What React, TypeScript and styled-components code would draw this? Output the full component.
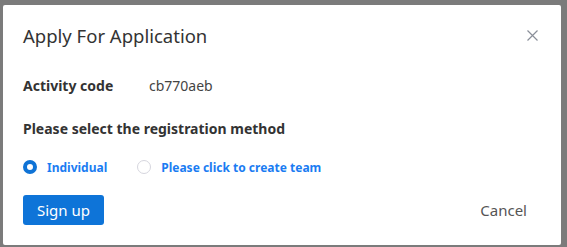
import React, { useState } from 'react'
import styled, { createGlobalStyle } from 'styled-components'

const GlobalStyle = createGlobalStyle`
  html, body {
    margin: 0;
    padding: 0;
    background: #7b7b7b;
    font-family: 'Noto Sans', 'Open Sans', sans-serif;
  }
`

const Backdrop = styled.div`
  width: 567px;
  height: 247px;
  padding: 5px 6px 2px 3px;
  box-sizing: border-box;
  background: #7b7b7b;
  display: flex;
`

const Dialog = styled.div`
  flex: 1;
  background: #fff;
  border-radius: 2px;
  padding: 18px 20px 0 20px;
  display: flex;
  flex-direction: column;
`

const Header = styled.div`
  display: flex;
  align-items: center;
  justify-content: space-between;
  height: 24px;
`

const Title = styled.div`
  font-size: 18.5px;
  color: #333;
`

const CloseButton = styled.button`
  border: 0;
  background: none;
  padding: 0;
  margin-right: 3px;
  display: flex;
  cursor: pointer;
`

const InfoRow = styled.div`
  display: flex;
  align-items: center;
  margin-top: 28px;
  font-size: 14px;
  height: 20px;
`

const Label = styled.span`
  font-weight: 700;
  color: #333;
  width: 126px;
`

const Value = styled.span`
  color: #444;
`

const SectionTitle = styled.div`
  margin-top: 24px;
  font-size: 14px;
  font-weight: 700;
  color: #333;
  height: 20px;
  line-height: 20px;
`

const RadioGroup = styled.div`
  display: flex;
  align-items: center;
  gap: 30px;
  margin-top: 19px;
  height: 18px;
`

const RadioOption = styled.label`
  display: flex;
  align-items: center;
  gap: 10px;
  cursor: pointer;
  font-size: 12px;
  font-weight: 700;
  color: #1a7cf2;
`

const RadioDot = styled.span<{ $checked: boolean }>`
  width: 14px;
  height: 14px;
  box-sizing: border-box;
  border-radius: 50%;
  border: ${(p) => (p.$checked ? '4px solid #0f73d6' : '1px solid #d6d6de')};
  background: #fff;
`

const Footer = styled.div`
  display: flex;
  align-items: center;
  justify-content: space-between;
  margin-top: 19px;
  padding-right: 14px;
`

const PrimaryButton = styled.button`
  width: 81px;
  height: 30px;
  border: 0;
  border-radius: 3px;
  background: #0e74d8;
  color: #fff;
  font-family: inherit;
  font-size: 15px;
  cursor: pointer;
`

const TextButton = styled.button`
  border: 0;
  background: none;
  color: #555;
  font-family: inherit;
  font-size: 15px;
  padding: 0;
  cursor: pointer;
`

export default function App() {
  const [method, setMethod] = useState<'individual' | 'team'>('individual')

  return (
    <>
      <GlobalStyle />
      <Backdrop>
        <Dialog>
          <Header>
            <Title>Apply For Application</Title>
            <CloseButton aria-label="close">
              <svg width="11" height="11" viewBox="0 0 11 11">
                <path d="M0.5 0.5L10.5 10.5M10.5 0.5L0.5 10.5" stroke="#8a8f99" strokeWidth="1.2" />
              </svg>
            </CloseButton>
          </Header>
          <InfoRow>
            <Label>Activity code</Label>
            <Value>cb770aeb</Value>
          </InfoRow>
          <SectionTitle>Please select the registration method</SectionTitle>
          <RadioGroup>
            <RadioOption onClick={() => setMethod('individual')}>
              <RadioDot $checked={method === 'individual'} />
              Individual
            </RadioOption>
            <RadioOption onClick={() => setMethod('team')}>
              <RadioDot $checked={method === 'team'} />
              Please click to create team
            </RadioOption>
          </RadioGroup>
          <Footer>
            <PrimaryButton>Sign up</PrimaryButton>
            <TextButton>Cancel</TextButton>
          </Footer>
        </Dialog>
      </Backdrop>
    </>
  )
}
